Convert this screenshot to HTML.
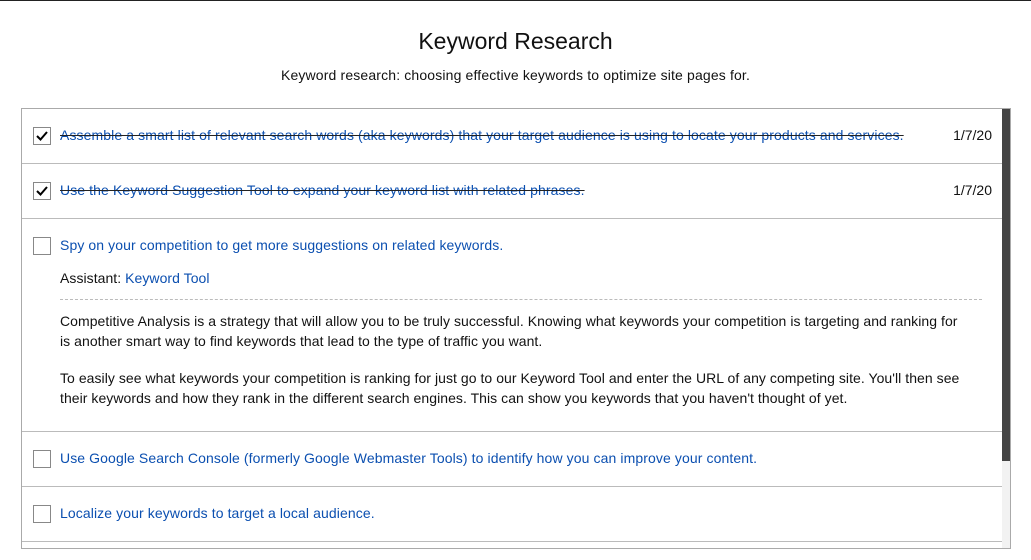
<!DOCTYPE html>
<html><head><style>
*{margin:0;padding:0;box-sizing:border-box}
body{width:1031px;height:560px;background:#fff;font-family:"Liberation Sans",sans-serif;color:#111;border-top:1px solid #222;position:relative;overflow:hidden}
h1{position:absolute;top:27px;left:0;width:1031px;text-align:center;font-size:23px;font-weight:normal;color:#111}
.sub{position:absolute;top:66px;left:0;width:1031px;text-align:center;font-size:14px;letter-spacing:0.15px}
.box{position:absolute;left:21px;top:107px;width:990px;height:441px;border:1px solid #aaa;overflow:hidden}
.sb{position:absolute;right:0;top:0;width:8px;height:439px;background:#f2f2f2}
.sb div{height:352px;background:#444}
.row{position:absolute;left:0;width:981px;border-bottom:1px solid #bbb}
.cb{position:absolute;left:11px;width:18px;height:18px;border:1px solid #888;background:#fff}
.cb svg{position:absolute;left:2px;top:2px}
.t{position:absolute;left:38px;font-size:14px;color:#0b4fb0;white-space:nowrap;letter-spacing:0.1px}
.s{text-decoration:line-through;text-decoration-color:#222}
.d{position:absolute;right:11px;font-size:14px}
.p{position:absolute;left:38px;width:912px;font-size:14px;line-height:20px;letter-spacing:0.05px}
.dash{position:absolute;left:38px;width:922px;border-top:1px dashed #bbb}
</style></head><body>
<h1>Keyword Research</h1>
<div class="sub">Keyword research: choosing effective keywords to optimize site pages for.</div>
<div class="box">
<div class="row" style="top:0;height:55px"><div class="cb" style="top:18px"><svg width="12" height="12"><path d="M1 6 L4.5 9.5 L11 2" stroke="#000" stroke-width="2" fill="none"/></svg></div><div class="t s" style="top:18px">Assemble a smart list of relevant search words (aka keywords) that your target audience is using to locate your products and services.</div><div class="d" style="top:18px">1/7/20</div></div>
<div class="row" style="top:55px;height:55px"><div class="cb" style="top:18px"><svg width="12" height="12"><path d="M1 6 L4.5 9.5 L11 2" stroke="#000" stroke-width="2" fill="none"/></svg></div><div class="t s" style="top:18px">Use the Keyword Suggestion Tool to expand your keyword list with related phrases.</div><div class="d" style="top:18px">1/7/20</div></div>
<div class="row" style="top:110px;height:213px"><div class="cb" style="top:18px"></div><div class="t" style="top:18px">Spy on your competition to get more suggestions on related keywords.</div>
<div class="p" style="top:49px;color:#111">Assistant: <span style="color:#0b4fb0">Keyword Tool</span></div>
<div class="dash" style="top:80px"></div>
<div class="p" style="top:92px;width:900px">Competitive Analysis is a strategy that will allow you to be truly successful. Knowing what keywords your competition is targeting and ranking for is another smart way to find keywords that lead to the type of traffic you want.</div>
<div class="p" style="top:149px">To easily see what keywords your competition is ranking for just go to our Keyword Tool and enter the URL of any competing site. You'll then see their keywords and how they rank in the different search engines. This can show you keywords that you haven't thought of yet.</div></div>
<div class="row" style="top:323px;height:55px"><div class="cb" style="top:18px"></div><div class="t" style="top:18px">Use Google Search Console (formerly Google Webmaster Tools) to identify how you can improve your content.</div></div>
<div class="row" style="top:378px;height:55px"><div class="cb" style="top:18px"></div><div class="t" style="top:18px">Localize your keywords to target a local audience.</div></div>
<div class="sb"><div></div></div>
</div>
</body></html>
